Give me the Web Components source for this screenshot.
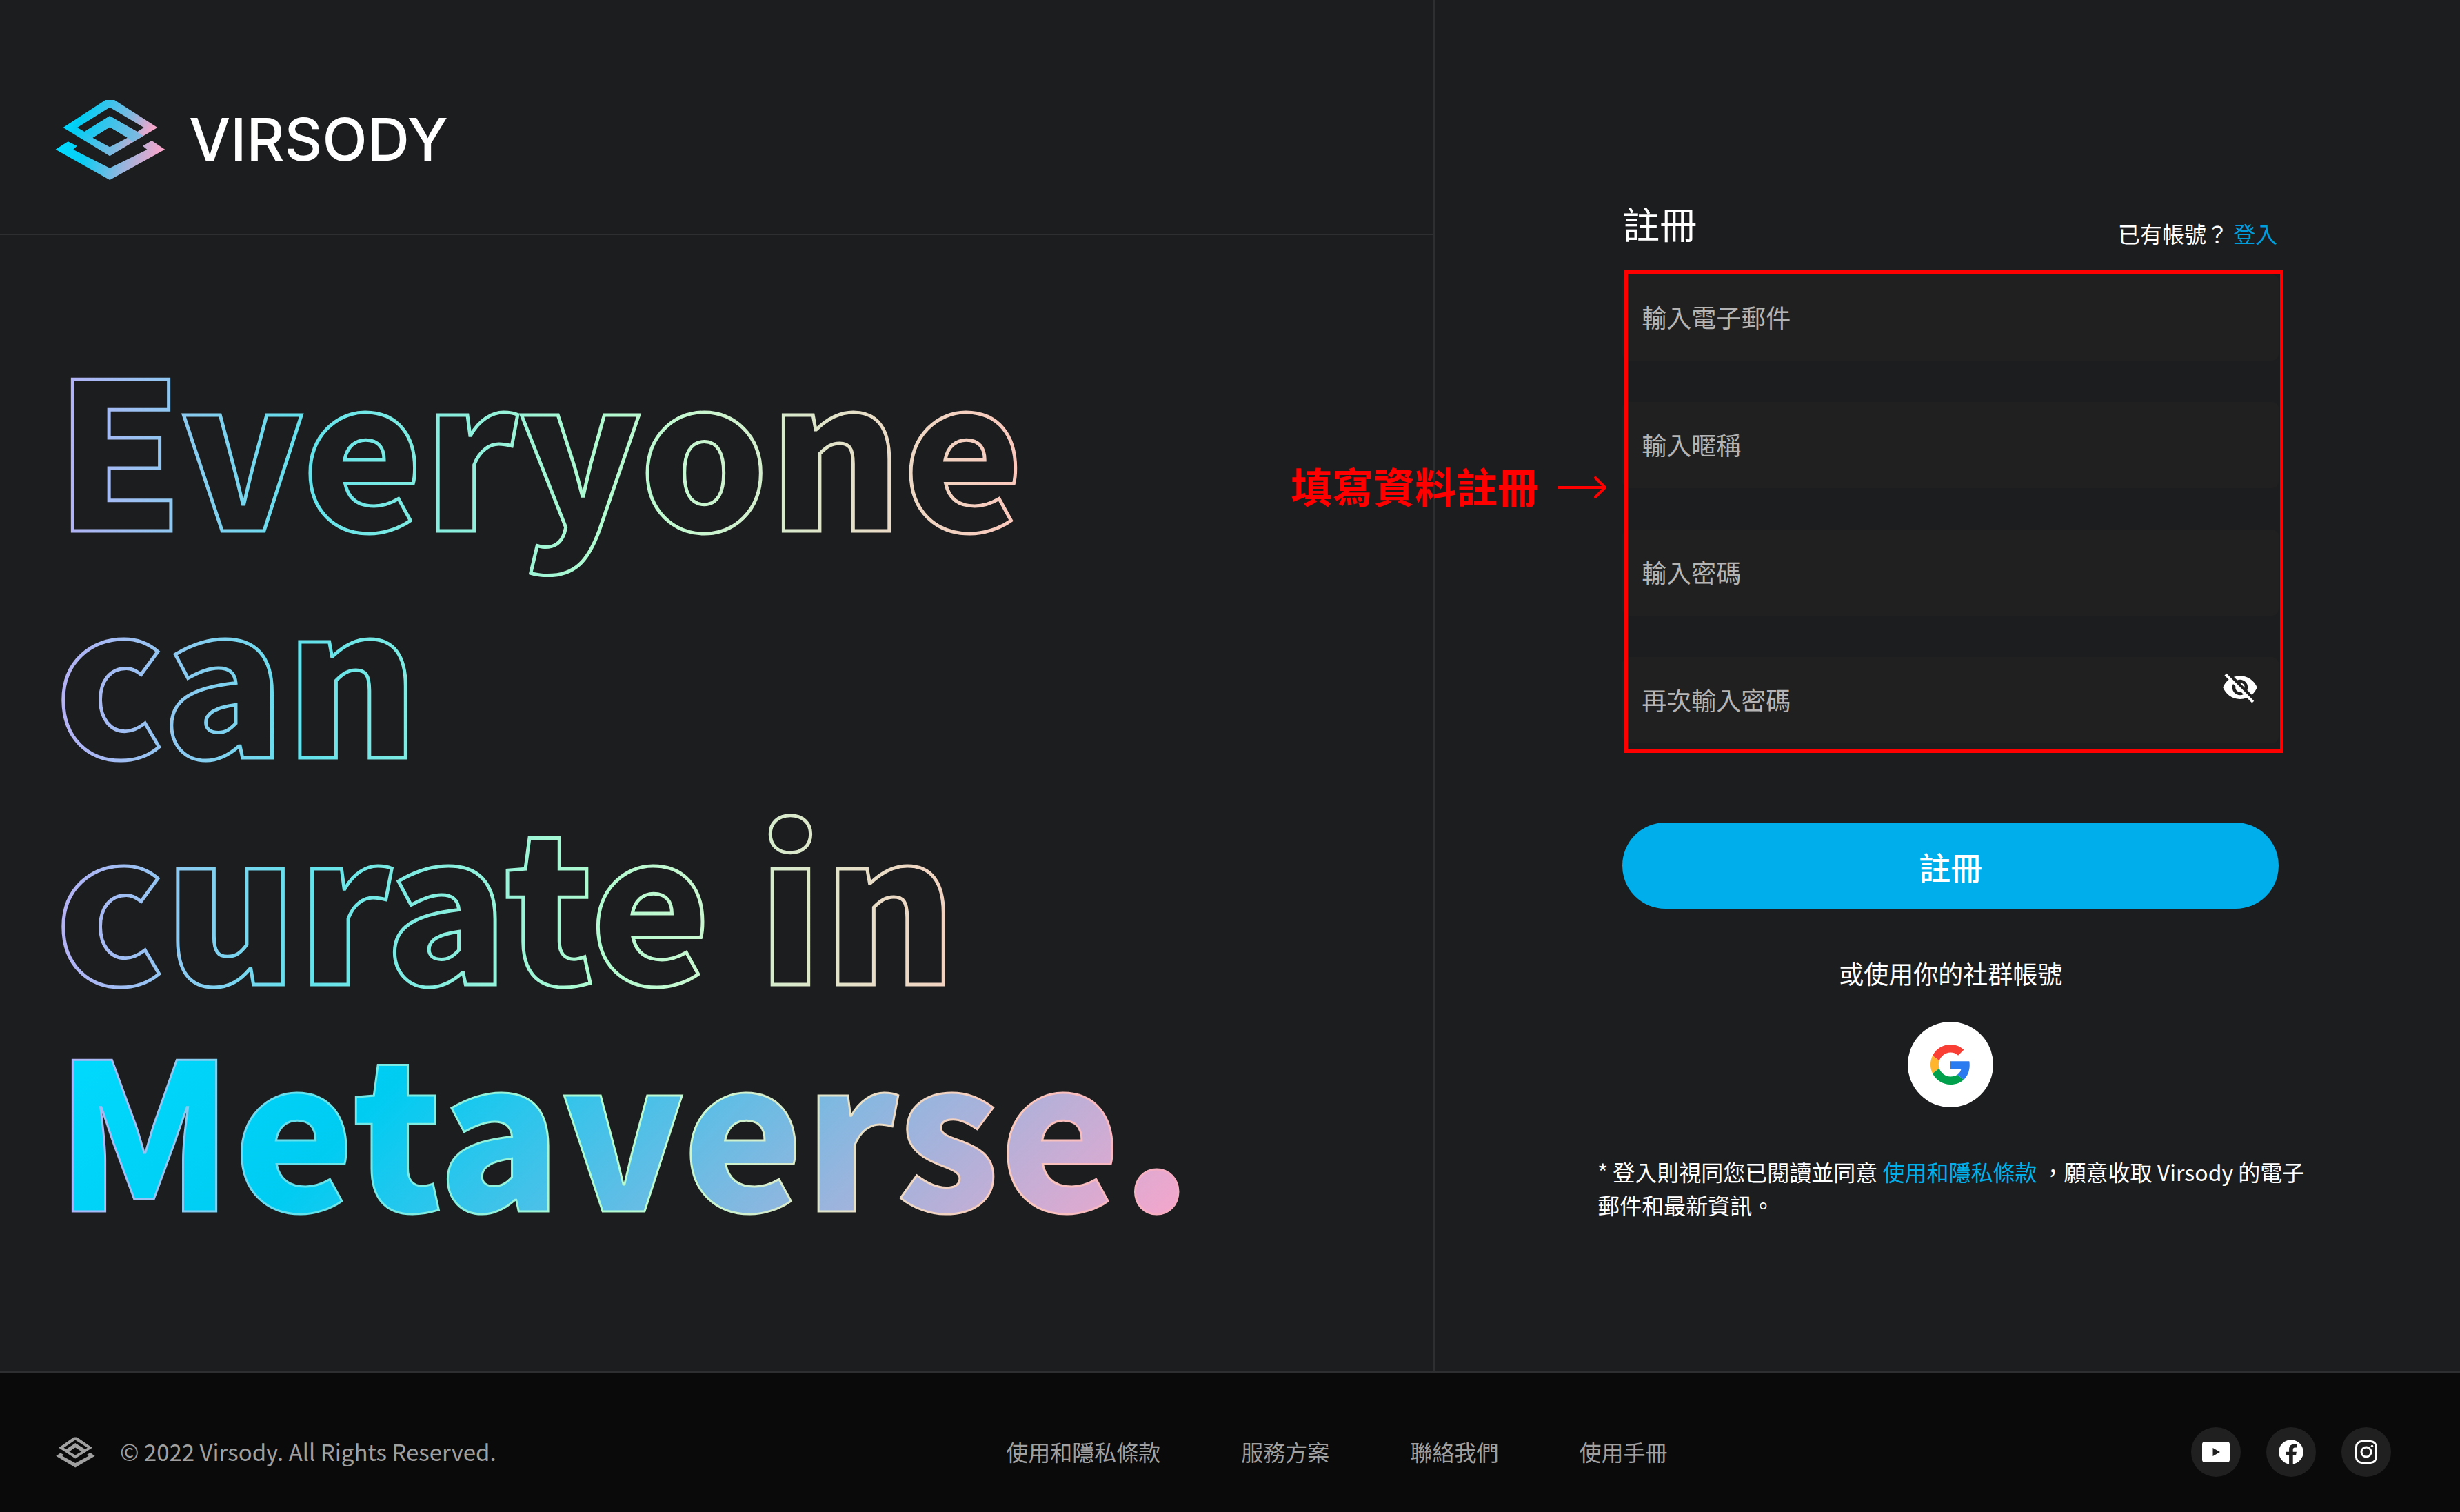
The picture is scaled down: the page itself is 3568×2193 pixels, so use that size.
<!DOCTYPE html>
<html lang="zh-Hant">
<head>
<meta charset="utf-8">
<meta name="viewport" content="width=device-width, initial-scale=1">
<title>Virsody 註冊</title>
<style>
  :root {
    --bg: #1c1d1f;
    --line: #2e2f31;
    --surface: #202020;
    --accent: #00aeeb;
    --muted: #a0a0a0;
  }
  body {
    margin: 0;
    background: var(--bg);
    color: #fff;
    font-family: "Noto Sans CJK TC", "Noto Sans", sans-serif;
    font-size: 32px;
    line-height: 48px;
  }
</style>
</head>
<body>
<vs-page>
  <vs-brand slot="brand"></vs-brand>
  <vs-headline slot="hero"></vs-headline>
  <vs-register slot="form"></vs-register>
  <vs-footer slot="footer"></vs-footer>
</vs-page>

<script>
const define = (name, html, setup) => {
  const template = document.createElement('template');
  template.innerHTML = html;
  customElements.define(name, class extends HTMLElement {
    constructor() {
      super();
      this.attachShadow({ mode: 'open' }).append(template.content.cloneNode(true));
    }
    connectedCallback() {
      if (setup) setup(this, this.shadowRoot);
    }
  });
};

/* Stacked-diamond mark; "mono" paints it in the current colour. */
define('vs-mark', `
  <style>
    :host { display: block; width: 160px; height: 118px; }
    svg { display: block; width: 100%; height: 100%; }
    .top { fill: url(#g1); } .chevron { fill: url(#g2); } .base { fill: url(#g3); }
    :host([mono]) path { fill: currentColor; }
  </style>
  <svg viewBox="0 0 160 118" preserveAspectRatio="none" aria-hidden="true">
    <defs>
      <linearGradient id="g1" gradientUnits="userSpaceOnUse" x1="25" y1="12" x2="132" y2="62">
        <stop offset="0" stop-color="#00d9ff"/><stop offset=".15" stop-color="#00cdf4"/><stop offset=".68" stop-color="#7db9e0"/><stop offset="1" stop-color="#f5a6cb"/>
      </linearGradient>
      <linearGradient id="g2" gradientUnits="userSpaceOnUse" x1="40" y1="30" x2="130" y2="64">
        <stop offset="0" stop-color="#00cdf4"/><stop offset="1" stop-color="#92b5dd"/>
      </linearGradient>
      <linearGradient id="g3" gradientUnits="userSpaceOnUse" x1="10" y1="50" x2="152" y2="84">
        <stop offset="0" stop-color="#00dbff"/><stop offset=".25" stop-color="#08cdf4"/><stop offset=".68" stop-color="#9cb4dd"/><stop offset="1" stop-color="#f9a5cb"/>
      </linearGradient>
    </defs>
    <path class="top" fill-rule="evenodd" d="M73 1H86L148.400 41 79.200 82.300 11.600 41ZM79.200 11.700 32.200 41 42.500 47 79.200 24.300 119.200 47 128.700 41ZM79.200 40.300 54.300 55.700 79.200 69.300 105 55.700Z"/>
    <path class="chevron" d="M79.200 24.300 128 53 112 62 105 55.700 79.200 40.300 54.300 55.700 42.500 47Z"/>
    <path class="base" d="M.600 72.700 18.700 61.300 31.800 67.700 26.300 73 79.200 99.700 133.400 73 127.100 67.700 140.100 60 159.100 72.700 79.200 117Z"/>
  </svg>`);

define('vs-brand', `
  <style>
    :host { display: block; }
    a { display: flex; align-items: center; gap: 34px; color: #fff; text-decoration: none;
        font: 500 85px/118px Inter, Roboto, "Liberation Sans", sans-serif; }
  </style>
  <a href="#"><vs-mark></vs-mark><span>VIRSODY</span></a>`);

/* The four-line slogan: outlined text, with the last line filled. */
define('vs-headline', `
  <style>
    :host { display: block; }
    h1 { margin: 0; font-weight: 900; font-size: 295px; line-height: 330px; }
    svg { display: block; width: 100%; height: 1340px; overflow: visible; }
    text { fill: none; stroke: url(#edge); stroke-width: 5px; }
    .solid { fill: url(#fill); stroke-width: 3px; }
  </style>
  <h1><svg>
    <defs>
      <linearGradient id="edge" gradientUnits="userSpaceOnUse" x1="0" y1="0" x2="1640" y2="0">
        <stop offset="0" stop-color="#b7b0f5"/><stop offset=".22" stop-color="#62e2ec"/>
        <stop offset=".48" stop-color="#b0fbd0"/><stop offset=".56" stop-color="#c6f8d0"/>
        <stop offset=".73" stop-color="#eadcc6"/><stop offset=".85" stop-color="#fac8bc"/><stop offset="1" stop-color="#f5a8c4"/>
      </linearGradient>
      <linearGradient id="fill" gradientUnits="userSpaceOnUse" x1="0" y1="1040" x2="970" y2="2010">
        <stop offset="0" stop-color="#00dbff"/><stop offset=".3" stop-color="#00ccf2"/>
        <stop offset=".72" stop-color="#9cb4dd"/><stop offset="1" stop-color="#faa5cb"/>
      </linearGradient>
    </defs>
    <text x="0" y="328">Everyone</text>
    <text x="0" y="657">can</text>
    <text x="0" y="986">curate in</text>
    <text class="solid" x="0" y="1315">Metaverse.</text>
  </svg></h1>`);

/* Text box whose label rests inside it until something is typed. */
define('vs-field', `
  <style>
    :host { display: grid; height: 125px; position: relative; }
    label, input { grid-area: 1 / 1; box-sizing: border-box; width: 100%; font: inherit; font-size: 36px; padding: 0 28px; }
    input { margin: 0; border: 0; border-radius: 9px; outline: 0; background: var(--surface); color: #fff; }
    label { z-index: 1; align-self: center; padding-bottom: 4px; color: #b4b4b4; pointer-events: none; }
    input:not(:placeholder-shown) + label { visibility: hidden; }
    ::slotted(button) { position: absolute; z-index: 2; top: 17px; right: 29px; }
  </style>
  <input id="box" placeholder=" "><label for="box"></label><slot></slot>`,
  (host, root) => {
    root.querySelector('input').type = host.getAttribute('type') || 'text';
    root.querySelector('label').textContent = host.getAttribute('label');
  });

/* Red frame laid over whatever it wraps, with a note that points at it. */
define('vs-callout', `
  <style>
    :host { display: block; position: relative; }
    .frame { position: absolute; inset: -6px -7px -14px 3px; border: 5px solid #f00; pointer-events: none; z-index: 3; }
    .note { position: absolute; right: 100%; top: 262px; margin-right: 22px; z-index: 3; display: flex; align-items: center; gap: 27px;
            color: #f00; font-size: 60px; font-weight: 700; line-height: 88px; white-space: nowrap; }
    .note span { padding-bottom: 6px; }
    svg { display: block; width: 72px; height: 34px; fill: none; stroke: #f00; stroke-width: 4; stroke-linejoin: round; stroke-linecap: round; }
  </style>
  <slot></slot>
  <div class="frame"></div>
  <div class="note"><span></span><svg viewBox="0 0 72 34"><path stroke-linecap="butt" d="M1 17H69"/><path d="M55 3 69 17 55 31"/></svg></div>`,
  (host, root) => { root.querySelector('.note span').textContent = host.getAttribute('note'); });

define('vs-register', `
  <style>
    :host { display: block; }
    form { width: 952px; max-width: 90%; margin: 0 auto; display: flex; flex-direction: column; }
    header { display: flex; justify-content: space-between; align-items: flex-end; margin-bottom: 34px; padding-right: 2px; }
    h2 { margin: 0; font-weight: 400; font-size: 54px; line-height: 80px; }
    p { margin: 0; }
    header p { padding-bottom: 2px; }
    a { color: #009ddd; text-decoration: none; }
    .fields { display: flex; flex-direction: column; gap: 60px; }
    .eye { display: block; margin: 0; padding: 0; border: 0; background: none; color: #fff; width: 54px; height: 54px; }
    .eye svg { display: block; width: 100%; height: 100%; fill: currentColor; }
    .submit { height: 125px; margin: 115px 0 0; padding: 0; border: 0; border-radius: 63px; background: var(--accent);
              color: #fff; font: inherit; font-size: 46px; font-weight: 500; line-height: 64px; }
    .or { margin-top: 66px; text-align: center; font-size: 36px; line-height: 54px; }
    .google { align-self: center; display: grid; place-items: center; width: 124px; height: 124px; margin: 44px 0 0; padding: 0;
              border: 0; border-radius: 50%; background: #fff; }
    .google svg { display: block; width: 58px; height: 58px; }
    .terms { margin: 69px -44px 0 -36px; }
    .terms a { color: #00b0ea; }
  </style>
  <form>
    <header><h2>註冊</h2><p>已有帳號？ <a href="#">登入</a></p></header>
    <vs-callout note="填寫資料註冊"><div class="fields">
      <vs-field type="email" label="輸入電子郵件"></vs-field>
      <vs-field label="輸入暱稱"></vs-field>
      <vs-field type="password" label="輸入密碼"></vs-field>
      <vs-field type="password" label="再次輸入密碼"><button class="eye" type="button" aria-label="顯示密碼"><svg viewBox="0 0 24 24"><path d="M12 7c2.760 0 5 2.240 5 5 0 .650-.130 1.260-.360 1.830l2.920 2.920c1.510-1.260 2.700-2.890 3.430-4.750-1.730-4.390-6-7.500-11-7.500-1.400 0-2.740.250-3.980.700l2.160 2.160C10.740 7.130 11.350 7 12 7zM2 4.270l2.280 2.280.460.460C3.080 8.300 1.780 10.020 1 12c1.730 4.390 6 7.500 11 7.500 1.550 0 3.030-.300 4.380-.840l.420.420L19.730 22 21 20.730 3.270 3 2 4.270zM7.530 9.800l1.550 1.550c-.050.210-.080.430-.080.650 0 1.660 1.340 3 3 3 .220 0 .440-.030.650-.080l1.550 1.550c-.670.330-1.410.530-2.200.530-2.760 0-5-2.240-5-5 0-.790.200-1.530.530-2.200zm4.310-.780l3.150 3.150.020-.160c0-1.660-1.340-3-3-3l-.170.010z"/></svg></button></vs-field>
    </div></vs-callout>
    <button class="submit" type="submit">註冊</button>
    <p class="or">或使用你的社群帳號</p>
    <button class="google" type="button" aria-label="Google"><svg viewBox="0 0 48 48"><path fill="#f93e35" d="M24 9.500c3.540 0 6.710 1.220 9.210 3.600l6.850-6.850C35.900 2.380 30.470 0 24 0 14.620 0 6.510 5.380 2.560 13.220l7.980 6.190C12.430 13.720 17.740 9.500 24 9.500z"/><path fill="#2b7bf0" d="M46.980 24.550c0-1.570-.150-3.090-.380-4.550H24v9.020h12.940c-.580 2.960-2.260 5.480-4.780 7.180l7.730 6c4.510-4.180 7.090-10.360 7.090-17.650z"/><path fill="#ffb52e" d="M10.530 28.590c-.480-1.450-.760-2.990-.760-4.590s.270-3.140.760-4.590l-7.980-6.190C.920 16.460 0 20.120 0 24s.920 7.540 2.560 10.780l7.970-6.190z"/><path fill="#00a04d" d="M24 48c6.480 0 11.930-2.130 15.890-5.810l-7.730-6c-2.150 1.450-4.920 2.300-8.160 2.300-6.260 0-11.570-4.220-13.470-9.910l-7.980 6.190C6.510 42.620 14.620 48 24 48z"/></svg></button>
    <p class="terms">* 登入則視同您已閱讀並同意 <a href="#">使用和隱私條款</a> ，願意收取 Virsody 的電子郵件和最新資訊。</p>
  </form>`);

define('vs-social', `
  <style>
    :host { display: block; }
    a { display: grid; place-items: center; width: 72px; height: 72px; border-radius: 50%; background: var(--surface); color: #fff; }
    ::slotted(svg) { display: block; width: 42px; height: 42px; fill: currentColor; }
  </style>
  <a href="#"><slot></slot></a>`,
  (host, root) => root.querySelector('a').setAttribute('aria-label', host.getAttribute('name')));

define('vs-footer', `
  <style>
    :host { display: flex; align-items: center; justify-content: space-between; box-sizing: border-box; height: 204px; padding: 28px 100px 0 81px;
            border-top: 2px solid var(--line); background: #0a0a0a; color: var(--muted); }
    .own { display: flex; align-items: center; gap: 36px; font-size: 33px; }
    .own span, nav { padding-bottom: 2px; }
    vs-mark { width: 57px; height: 45px; }
    nav { display: flex; gap: 117px; margin-right: 20px; }
    nav a { color: inherit; text-decoration: none; }
    .social { display: flex; gap: 37px; }
  </style>
  <div class="own"><vs-mark mono></vs-mark><span>© 2022 Virsody. All Rights Reserved.</span></div>
  <nav><a href="#">使用和隱私條款</a><a href="#">服務方案</a><a href="#">聯絡我們</a><a href="#">使用手冊</a></nav>
  <div class="social">
    <vs-social name="YouTube"><svg viewBox="0 0 42 42"><path fill-rule="evenodd" d="M5 6H37Q41 6 41 10V32Q41 36 37 36H5Q1 36 1 32V10Q1 6 5 6ZM16.500 15V27L27 21Z"/></svg></vs-social>
    <vs-social name="Facebook"><svg viewBox="0 0 24 24"><path d="M22.200 12.060C22.200 6.430 17.630 1.860 12 1.860S1.800 6.430 1.800 12.060c0 5.060 3.690 9.260 8.530 10.060v-7.430H7.600v-2.830h2.730V9.620c0-2.700 1.640-4.060 3.970-4.060 1.100 0 2.300.150 2.300.150v2.600h-1.400c-1.300 0-1.650.800-1.650 1.600v1.950h2.950l-.500 2.830h-2.450v7.430c4.800-.800 8.650-5 8.650-10.060z"/></svg></vs-social>
    <vs-social name="Instagram"><svg viewBox="0 0 42 42" style="fill:none;stroke:currentColor;stroke-width:3"><rect x="6.500" y="5.500" width="29" height="31" rx="8"/><circle cx="21" cy="21" r="7"/><circle cx="29.500" cy="12.500" r="1.800" style="fill:currentColor;stroke:none"/></svg></vs-social>
  </div>`);

define('vs-page', `
  <style>
    :host { display: flex; flex-direction: column; min-height: 100vh; }
    main { flex: 1; display: grid; grid-template-columns: 7fr 5fr; }
    .left { border-right: 2px solid var(--line); }
    .top { padding: 144px 80px 77px; border-bottom: 2px solid var(--line); }
    .hero { padding: 101px 80px 0; }
    .right { padding: 284px 0 0 9px; }
  </style>
  <main>
    <div class="left"><div class="top"><slot name="brand"></slot></div><div class="hero"><slot name="hero"></slot></div></div>
    <div class="right"><slot name="form"></slot></div>
  </main>
  <slot name="footer"></slot>`);
</script>
</body>
</html>
